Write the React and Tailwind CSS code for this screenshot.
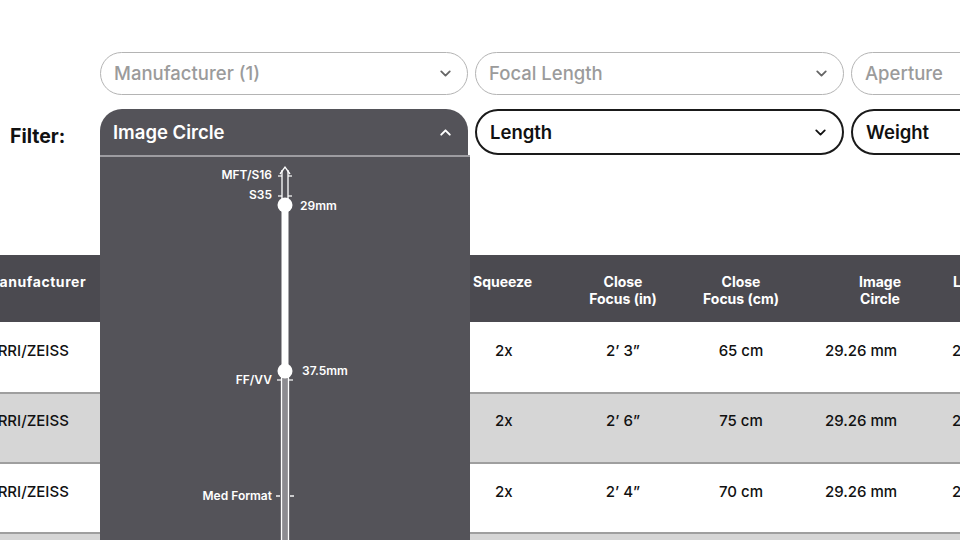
import React from "react";
import { ChevronDown, ChevronUp } from "lucide-react";

const font = { fontFamily: "Inter, 'Noto Sans', sans-serif" };

function Pill({ label, muted, className = "" }) {
  return (
    <div
      className={
        "flex items-center justify-between rounded-full shrink-0 h-full pl-[13px] pr-[13px] " +
        (muted
          ? "border-[1.5px] border-[#b4b4b4] text-[#9b9b9b] font-medium"
          : "border-2 border-[#1a1a1a] text-[#111] font-semibold") +
        " " +
        className
      }
    >
      <span className="text-[18.5px] leading-none">{label}</span>
      <ChevronDown
        size={17}
        strokeWidth={2.6}
        className={muted ? "text-[#666]" : "text-[#111]"}
      />
    </div>
  );
}

function Slider() {
  const cx = 185;
  const lbl = { fontFamily: "Inter, 'Noto Sans', sans-serif", fontSize: 12, fontWeight: 600, fill: "#fff" };
  return (
    <svg width="370" height="390" viewBox="0 0 370 390" className="block">
      <line x1={cx - 3} y1="13" x2={cx - 3} y2="48" stroke="#fff" strokeWidth="1.3" />
      <line x1={cx + 3} y1="13" x2={cx + 3} y2="48" stroke="#fff" strokeWidth="1.3" />
      <polyline points={`${cx - 5},17 ${cx},10 ${cx + 5},17`} fill="none" stroke="#fff" strokeWidth="1.3" />
      <line x1={cx - 7} y1="19" x2={cx - 3} y2="19" stroke="#fff" strokeWidth="1.2" />
      <line x1={cx + 3} y1="19" x2={cx + 7} y2="19" stroke="#fff" strokeWidth="1.2" />
      <line x1={cx - 7} y1="39" x2={cx - 3} y2="39" stroke="#fff" strokeWidth="1.2" />
      <line x1={cx + 3} y1="39" x2={cx + 7} y2="39" stroke="#fff" strokeWidth="1.2" />
      <rect x={cx - 3.5} y="214" width="7" height="180" fill="#8d8c91" stroke="#fff" strokeWidth="1.3" />
      <line x1={cx - 8} y1="223" x2={cx - 4} y2="223" stroke="#fff" strokeWidth="1.2" />
      <line x1={cx + 4} y1="223" x2={cx + 8} y2="223" stroke="#fff" strokeWidth="1.2" />
      <line x1={cx - 9} y1="339" x2={cx - 5} y2="339" stroke="#fff" strokeWidth="1.4" />
      <line x1={cx + 5} y1="339" x2={cx + 9} y2="339" stroke="#fff" strokeWidth="1.4" />
      <rect x={cx - 3.5} y="48" width="7" height="166" fill="#fff" />
      <circle cx={cx} cy="48" r="7.5" fill="#fff" />
      <circle cx={cx} cy="214" r="7.5" fill="#fff" />
      <text x="172" y="22" textAnchor="end" style={lbl}>MFT/S16</text>
      <text x="172" y="42" textAnchor="end" style={lbl}>S35</text>
      <text x="200" y="53" style={lbl}>29mm</text>
      <text x="202" y="218" style={lbl}>37.5mm</text>
      <text x="172" y="227" textAnchor="end" style={lbl}>FF/VV</text>
      <text x="172" y="343" textAnchor="end" style={lbl}>Med Format</text>
    </svg>
  );
}

const cols = "grid grid-cols-[120px_368px_92px_126px_110px_150px_60px]";

const rows = [
  { m: "ARRI/ZEISS", sq: "2x", fin: "2\u2019 3\u201D", fcm: "65 cm", ic: "29.26 mm", l: "245 mm", bg: "bg-white", h: "h-[72px]", pt: "pt-[20px]" },
  { m: "ARRI/ZEISS", sq: "2x", fin: "2\u2019 6\u201D", fcm: "75 cm", ic: "29.26 mm", l: "245 mm", bg: "bg-[#d6d6d6]", h: "h-[70px]", pt: "pt-[18px]" },
  { m: "ARRI/ZEISS", sq: "2x", fin: "2\u2019 4\u201D", fcm: "70 cm", ic: "29.26 mm", l: "245 mm", bg: "bg-white", h: "h-[70px]", pt: "pt-[19px]" },
];

export default function App() {
  return (
    <div className="relative w-[960px] h-[540px] overflow-hidden bg-white" style={font}>
      <div className="pt-[52px]">
        <div className="flex h-[43px]">
          <div className="w-[100px] shrink-0" />
          <div className="flex gap-[7px]">
            <Pill label="Manufacturer (1)" muted className="w-[368px]" />
            <Pill label="Focal Length" muted className="w-[369px]" />
            <Pill label="Aperture" muted className="w-[368px]" />
          </div>
        </div>
        <div className="flex h-[46px] mt-[14px]">
          <div className="w-[100px] shrink-0 flex items-center pl-[10px]">
            <span className="text-[19.5px] font-bold text-[#111] mt-[10px]">Filter:</span>
          </div>
          <div className="flex gap-[7px]">
            <div className="relative w-[368px] h-full z-10">
              <div className="h-full bg-[#545359] rounded-t-[22px] flex items-center justify-between pl-[13px] pr-[14px]">
                <span className="text-[18.5px] font-semibold text-white leading-none">Image Circle</span>
                <ChevronUp size={17} strokeWidth={2.8} className="text-white" />
              </div>
              <div className="absolute left-0 top-full w-[370px] h-[390px] bg-[#545359] border-t-2 border-[#9d9ca1]">
                <Slider />
              </div>
            </div>
            <Pill label="Length" className="w-[369px]" />
            <Pill label="Weight" className="w-[368px]" />
          </div>
        </div>
      </div>

      <div className="mt-[100px] -ml-[20px] w-[1006px]">
        <div className={cols + " h-[67px] bg-[#4b4a50] text-white font-bold text-[14px] leading-[17px] pt-[18px]"}>
          <div className="pl-[6px] tracking-[0.04em]">Manufacturer</div>
          <div />
          <div className="pl-[5px]">Squeeze</div>
          <div className="text-center">Close<br />Focus (in)</div>
          <div className="text-center">Close<br />Focus (cm)</div>
          <div className="text-center pl-[18px]">Image<br />Circle</div>
          <div className="pl-[7px] whitespace-nowrap">Length</div>
        </div>
        {rows.map((r, i) => (
          <div
            key={i}
            className={cols + " " + r.h + " " + r.bg + " " + r.pt + " border-b-2 border-[#9f9f9f] text-[#111] text-[15px] font-medium leading-[18px]"}
          >
            <div className="pl-[7px] whitespace-nowrap">{r.m}</div>
            <div />
            <div className="pl-[27px]">{r.sq}</div>
            <div className="text-center">{r.fin}</div>
            <div className="text-center">{r.fcm}</div>
            <div className="text-center pr-[20px]">{r.ic}</div>
            <div className="pl-[6px] whitespace-nowrap">{r.l}</div>
          </div>
        ))}
        <div className={cols + " h-[68px] bg-[#d6d6d6]"} />
      </div>
    </div>
  );
}
